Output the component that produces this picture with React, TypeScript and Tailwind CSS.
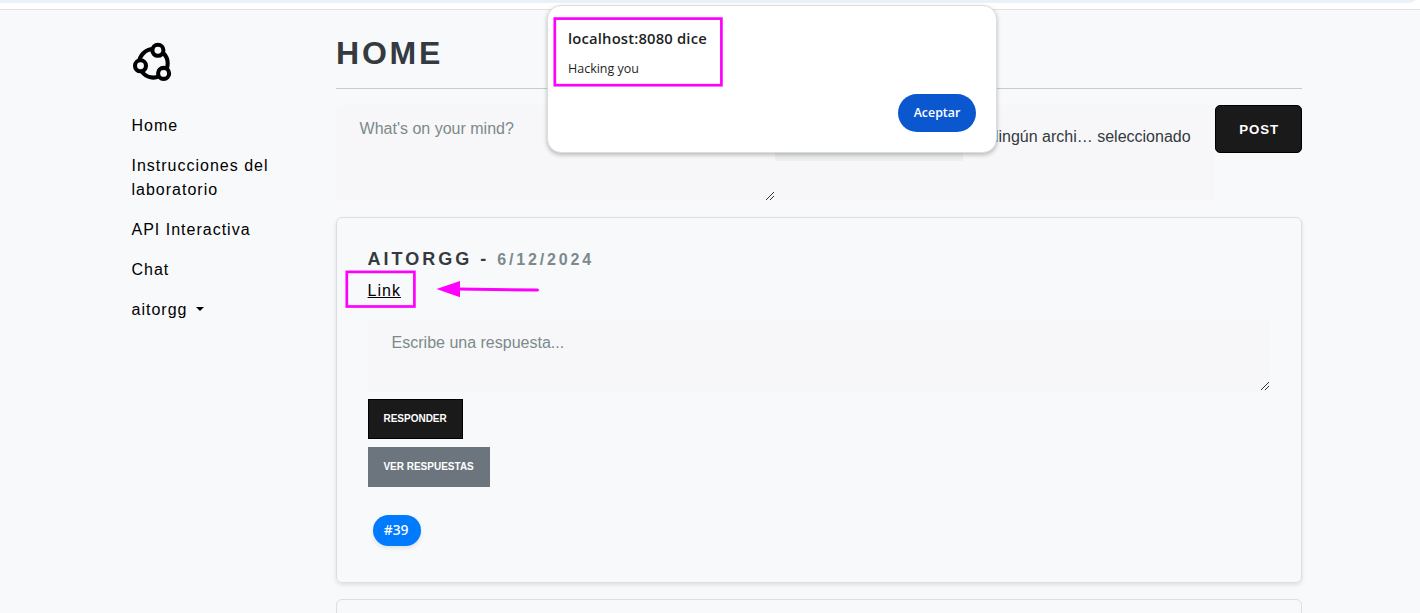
import React from "react";

const NAV = ["Home", "Instrucciones del laboratorio", "API Interactiva", "Chat"];

function Logo() {
  return (
    <svg className="block h-[52px] w-[52px]" viewBox="0 0 52 52" fill="none" stroke="#000" strokeWidth="4.1">
      <circle cx="27.4" cy="27.3" r="14.3" />
      <g fill="#f8f9fb">
        <circle cx="31.9" cy="14.3" r="5.5" />
        <circle cx="14.5" cy="29.8" r="5.5" />
        <circle cx="37.6" cy="37.4" r="5.5" />
      </g>
    </svg>
  );
}

function Grip({ className }: { className: string }) {
  return (
    <svg className={className} width="9" height="9" viewBox="0 0 9 9" shapeRendering="crispEdges" fill="#333">
      {[0, 1, 2, 3, 4, 5, 6, 7].map((i) => (
        <rect key={i} x={i} y={7 - i} width="1" height="1" />
      ))}
      {[0, 1, 2, 3].map((i) => (
        <rect key={"s" + i} x={4 + i} y={7 - i} width="1" height="1" />
      ))}
    </svg>
  );
}

function Sidebar() {
  return (
    <aside className="flex w-[335.6px] shrink-0 flex-col pt-[26px] pl-[126px]">
      <Logo />
      <nav className="mt-[26px] flex w-[160px] flex-col gap-4 pl-[5.5px] text-base leading-6 tracking-[1px] text-black">
        {NAV.map((n) => (
          <a key={n}>{n}</a>
        ))}
        <a className="flex items-center">
          aitorgg
          <span className="-mt-[2px] ml-[9px] border-x-[4.5px] border-t-[4.5px] border-x-transparent border-t-black" />
        </a>
      </nav>
    </aside>
  );
}

function PostForm() {
  return (
    <form className="mt-4 flex h-24 items-start">
      <div className="relative h-24 w-[439px] rounded-l-md bg-[#f7f7f9] px-6 py-3 text-base leading-6 text-[#7b8a8b]">
        What's on your mind?
        <Grip className="absolute right-0 bottom-0" />
      </div>
      <div className="flex h-24 w-[440px] items-start bg-[#f7f7f9]">
        <div className="h-14 w-[188px] bg-[#eceeef]" />
        <span className="flex-1 pt-5 pr-6 text-right text-base leading-6 whitespace-nowrap text-[#343a40]">
          Ningún archi… seleccionado
        </span>
      </div>
      <button className="h-12 w-[87px] rounded-[5px] border border-black bg-[#1a1a1a] pt-px pl-[2px] text-[13.3px] font-bold tracking-[0.9px] text-white">
        POST
      </button>
    </form>
  );
}

function PostCard() {
  return (
    <article className="mt-4 h-[366px] rounded-md border border-[#dcdfe2] px-[31px] pt-[30px] shadow-[0_2px_4px_rgba(0,0,0,0.1)]">
      <h5 className="text-lg leading-[22px] font-bold tracking-[3px] text-[#343a40]">
        AITORGG - <span className="text-base tracking-[2.85px] text-[#7b8a8b]">6/12/2024</span>
      </h5>
      <div className="relative mt-[7px] h-6 text-base leading-6">
        <a className="tracking-[1px] text-black underline">Link</a>
        <svg className="absolute -top-[10px] -left-[23px]" width="72" height="39" viewBox="0 0 72 39" fill="none">
          <rect x="1.8" y="2.9" width="67.6" height="34.6" stroke="#ff00ff" strokeWidth="2.7" />
        </svg>
        <svg className="absolute top-[2px] left-[68px]" width="104" height="18" viewBox="0 0 104 18">
          <path d="M22 8 101.5 9" stroke="#ff00ff" strokeWidth="3" strokeLinecap="round" />
          <path d="M0.5 8 24 0V16.2Z" fill="#ff00ff" />
        </svg>
      </div>
      <div className="relative mt-4 h-[72px] bg-[#f7f7f9] px-6 py-3 text-base leading-6 text-[#7b8a8b]">
        Escribe una respuesta...
        <Grip className="absolute right-0 bottom-0" />
      </div>
      <div className="mt-2 flex flex-col items-start gap-2 text-[10px] leading-[14px] font-bold text-white">
        <button className="h-10 w-[95px] border border-black bg-[#1a1a1a] pb-px">RESPONDER</button>
        <button className="h-10 w-[122px] bg-[#6c757d] pb-px">VER RESPUESTAS</button>
      </div>
      <span className="mt-7 ml-[5px] flex h-[31px] w-12 items-center justify-center rounded-full bg-[#007bff] pr-px pb-px font-['Noto_Sans',sans-serif] text-[13.8px] font-medium text-white shadow-[0_2px_4px_rgba(0,0,0,0.1)]">
        #39
      </span>
    </article>
  );
}

function AlertDialog() {
  return (
    <div className="absolute top-[5px] left-[547px] flex h-[148px] w-[450px] flex-col rounded-[14px] border border-[#dcdedd] bg-white pl-5 font-['Open_Sans','Noto_Sans',sans-serif] text-[#1f1f1f] shadow-[0_2px_4px_rgba(0,0,0,0.25)]">
      <svg className="absolute top-[11px] left-[5px]" width="171" height="71" viewBox="0 0 171 71" fill="none">
        <rect x="1.8" y="1.6" width="166.6" height="66.6" stroke="#ff00ff" strokeWidth="2.7" />
      </svg>
      <p className="mt-[22px] text-[14.8px] leading-5 font-semibold tracking-[0.17px]">localhost:8080 dice</p>
      <p className="mt-3 text-[12.5px] leading-[18px]">Hacking you</p>
      <button className="mt-4 mr-5 h-[38px] w-[78px] self-end rounded-full bg-[#0b57d0] pt-px text-[12.4px] font-semibold text-white">
        Aceptar
      </button>
    </div>
  );
}

export default function App() {
  return (
    <div className="relative h-[613px] w-[1420px] overflow-hidden bg-[#f8f9fb] font-['Liberation_Sans',Arial,sans-serif]">
      <div className="bg-white pr-[5px]">
        <div className="h-[3px] rounded-br-[8px_3px] bg-[#eaf1fb]" />
      </div>
      <div className="h-[7px] border-b border-[#e0e1e2] bg-white" />
      <div className="flex">
        <Sidebar />
        <main className="w-[966px] shrink-0">
          <h1 className="flex h-[79px] items-start border-b border-[#c8cbce] pt-[23px] pl-[0.4px] text-[32px] leading-[40px] font-bold tracking-[2.8px] text-[#343a40]">
            HOME
          </h1>
          <PostForm />
          <PostCard />
          <article className="mt-4 h-40 rounded-md border border-[#dcdfe2]" />
        </main>
      </div>
      <AlertDialog />
    </div>
  );
}
